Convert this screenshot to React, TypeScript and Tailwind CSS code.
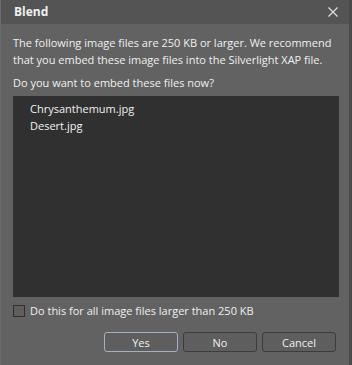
import { useState } from "react";

const files = ["Chrysanthemum.jpg", "Desert.jpg"];

const DialogButton = ({ label, primary }: { label: string; primary?: boolean }) => (
  <button
    className={`w-[74px] h-[20px] rounded-[3px] border bg-[#5e5e5e] text-[11px] leading-none text-[#f0f0f0] ${
      primary ? "border-[#a3b0bf]" : "border-[#3c3c3c]"
    }`}
  >
    {label}
  </button>
);

const App = () => {
  const [checked, setChecked] = useState(false);

  return (
    <div
      className="w-[352px] h-[365px] flex flex-col bg-[#626262] text-[#f0f0f0] border-r-[3px] border-r-[#4a4a4a] border-l border-l-[#6c6c6c]"
      style={{ fontFamily: '"Open Sans", "Noto Sans", sans-serif' }}
    >
      <div className="h-[24px] shrink-0 flex items-center justify-between bg-[#545454] pl-[13px] pr-[10px]">
        <div className="text-[12px] font-bold">Blend</div>
        <svg width="12" height="12" viewBox="0 0 12 12" className="text-[#dcdcdc]">
          <path d="M1.5 1.5L10.5 10.5M10.5 1.5L1.5 10.5" stroke="currentColor" strokeWidth="1.3" />
        </svg>
      </div>

      <div className="flex-1 flex flex-col px-[12px] pt-[10px] text-[11px] leading-[17px]">
        <p>
          The following image files are 250 KB or larger. We recommend that you embed these image
          files into the Silverlight XAP file.
        </p>
        <p className="mt-[6px]">Do you want to embed these files now?</p>

        <div className="mt-[5px] h-[201px] w-[326px] shrink-0 bg-[#303030] pt-[4px] pl-[17px]">
          {files.map((f) => (
            <div key={f} className="leading-[17px]">
              {f}
            </div>
          ))}
        </div>

        <label className="mt-[5px] flex items-center gap-[5px]" onClick={() => setChecked(!checked)}>
          <span className="w-[12px] h-[12px] border border-[#303030] bg-[#5e5e5e]" />
          <span>Do this for all image files larger than 250 KB</span>
        </label>

        <div className="mt-[13px] flex justify-end gap-[5px] pr-[1px]">
          <DialogButton label="Yes" primary />
          <DialogButton label="No" />
          <DialogButton label="Cancel" />
        </div>
      </div>
    </div>
  );
};

export default App;
